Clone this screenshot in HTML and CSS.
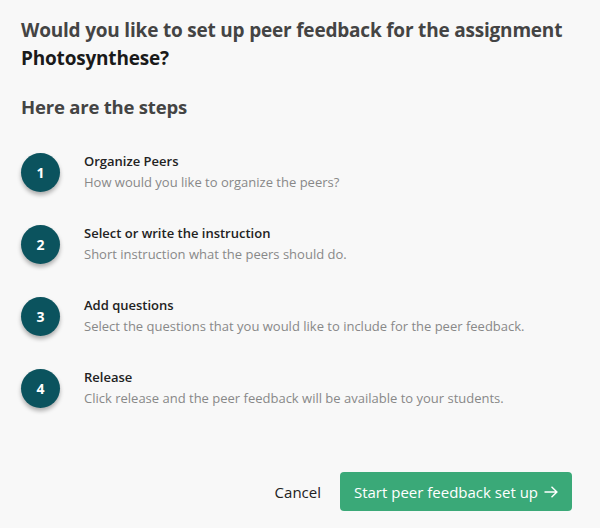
FILE: index.html
```html
<!DOCTYPE html>
<html lang="en">
<head>
    <meta charset="UTF-8">
    <title>Peer feedback set up</title>
    <link rel="stylesheet" href="styles.css">
</head>
<body>
    <div class="dialog">
        <h1 class="question">Would you like to set up peer feedback for the assignment <span class="assignment">Photosynthese?</span></h1>
        <h2 class="steps-title">Here are the steps</h2>

        <ol class="steps">
            <li class="step">
                <span class="step-number">1</span>
                <div class="step-text">
                    <div class="step-name">Organize Peers</div>
                    <div class="step-desc">How would you like to organize the peers?</div>
                </div>
            </li>
            <li class="step">
                <span class="step-number">2</span>
                <div class="step-text">
                    <div class="step-name">Select or write the instruction</div>
                    <div class="step-desc">Short instruction what the peers should do.</div>
                </div>
            </li>
            <li class="step">
                <span class="step-number">3</span>
                <div class="step-text">
                    <div class="step-name">Add questions</div>
                    <div class="step-desc">Select the questions that you would like to include for the peer feedback.</div>
                </div>
            </li>
            <li class="step">
                <span class="step-number">4</span>
                <div class="step-text">
                    <div class="step-name">Release</div>
                    <div class="step-desc">Click release and the peer feedback will be available to your students.</div>
                </div>
            </li>
        </ol>

        <div class="actions">
            <button class="cancel">Cancel</button>
            <button class="start">
                Start peer feedback set up
                <svg class="arrow" width="14" height="12" viewBox="0 0 14 12" fill="none" stroke="currentColor" stroke-width="1.4">
                    <path d="M0.5 6h12.5M7.5 0.8L12.9 6l-5.4 5.2"/>
                </svg>
            </button>
        </div>
    </div>
</body>
</html>
```

FILE: styles.css
```css
body {
    font-family: 'Open Sans', 'Noto Sans', sans-serif;
    margin: 0;
    padding: 0;
    background: #f8f8f8;
    color: #222;
}
.dialog {
    width: 600px;
    height: 528px;
    padding: 16px 28px 0 21px;
    box-sizing: border-box;
    display: flex;
    flex-direction: column;
}
.question {
    font-size: 19px;
    font-weight: 700;
    line-height: 28px;
    color: #444;
    margin: 0;
    letter-spacing: -0.2px;
}
.assignment {
    color: #1a1a1a;
}
.steps-title {
    font-size: 18.5px;
    font-weight: 700;
    line-height: 26px;
    color: #444;
    margin: 22px 0 0;
    letter-spacing: -0.2px;
}
.steps {
    list-style: none;
    margin: 31px 0 0;
    padding: 0;
    display: flex;
    flex-direction: column;
    gap: 30px;
}
.step {
    display: flex;
    align-items: center;
    gap: 24px;
}
.step-number {
    width: 39px;
    height: 39px;
    border-radius: 50%;
    background: #0b535e;
    color: #fff;
    font-size: 14px;
    font-weight: 700;
    display: flex;
    align-items: center;
    justify-content: center;
    box-shadow: 0 3px 4px rgba(0,0,0,0.3);
    flex-shrink: 0;
}
.step-name {
    font-size: 13px;
    font-weight: 600;
    line-height: 21px;
    color: #222;
}
.step-desc {
    font-size: 13px;
    line-height: 21px;
    color: #888;
}
.actions {
    margin-top: auto;
    margin-bottom: 17px;
    display: flex;
    justify-content: flex-end;
    align-items: center;
    gap: 19px;
}
.cancel {
    background: none;
    border: none;
    font-family: inherit;
    font-size: 15px;
    color: #222;
    padding: 0;
    cursor: pointer;
}
.start {
    width: 232px;
    height: 39px;
    background: #3aa978;
    color: #fff;
    border: none;
    border-radius: 4px;
    font-family: inherit;
    font-size: 15px;
    display: flex;
    align-items: center;
    justify-content: center;
    gap: 6px;
    cursor: pointer;
}
.start:hover {
    background: #33996c;
}
.arrow {
    margin-top: 1px;
}
```
